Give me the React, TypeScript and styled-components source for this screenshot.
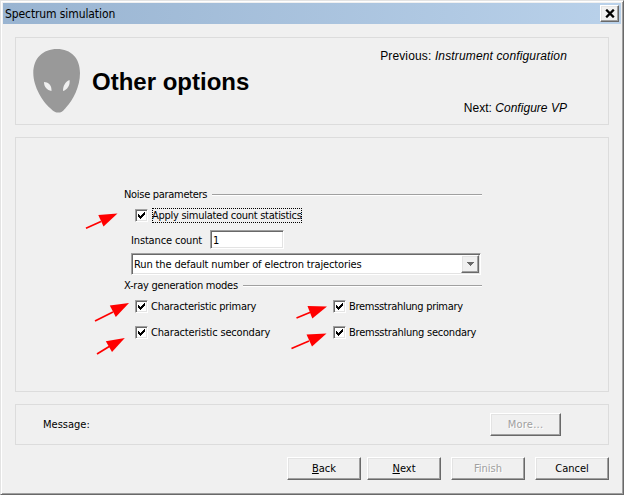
import React from "react";
import styled, { createGlobalStyle, css } from "styled-components";

const GlobalStyle = createGlobalStyle`
  * { box-sizing: border-box; }
  body {
    margin: 0;
    background: #f0f0f0;
    color: #000;
    font: 11px/13px "DejaVu Sans Condensed", "DejaVu Sans", sans-serif;
  }
  button, input { font: inherit; color: inherit; }
`;

const raised = css`
  border: 1px solid;
  border-color: #fff #696969 #696969 #fff;
  box-shadow: inset -1px -1px #a0a0a0, inset 1px 1px #e3e3e3;
`;

const sunken = css`
  border: 1px solid;
  border-color: #a0a0a0 #fff #fff #a0a0a0;
  box-shadow: inset 1px 1px #696969, inset -1px -1px #e3e3e3;
`;

const Dialog = styled.main`
  position: relative;
  display: flex;
  flex-direction: column;
  width: 624px;
  height: 495px;
  padding: 2px;
  background: #f0f0f0;
  border: 1px solid;
  border-color: #e3e3e3 #696969 #696969 #e3e3e3;
  box-shadow: inset 1px 1px #fff, inset -1px -1px #a0a0a0;
  overflow: hidden;
`;

const Text = styled.span<{ $spacing?: number }>`
  display: inline-block;
  white-space: pre;
  letter-spacing: ${(p) => p.$spacing ?? 0}px;
`;

const TitleBar = styled.header`
  display: flex;
  align-items: center;
  justify-content: space-between;
  height: 21px;
  padding: 0 2px;
  flex: none;
  font-size: 12px;
  background: linear-gradient(90deg, #99b4d1, #b9d1ea);
  > ${Text} {
    padding-top: 2px;
  }
`;

const CloseButton = styled.button`
  ${raised}
  display: grid;
  place-items: center;
  width: 19px;
  height: 17px;
  padding: 0;
  background: #f0f0f0;
`;

const Body = styled.div`
  display: flex;
  flex-direction: column;
  gap: 12px;
  padding: 13px 12px 0;
`;

const Panel = styled.section`
  border: 1px solid #dcdcdc;
`;

const Banner = styled(Panel)`
  display: flex;
  height: 88px;
  padding: 10px 41px 10px 17px;
  font: 12px/16px "Liberation Sans", Arial, sans-serif;
`;

const Heading = styled.h1`
  margin: 20px 0 0 11px;
  font: bold 24px/28px "Liberation Sans", Arial, sans-serif;
  white-space: nowrap;
`;

const Steps = styled.div`
  display: flex;
  flex: 1;
  flex-direction: column;
  align-items: flex-end;
  justify-content: space-between;
  height: 68px;
`;

const Options = styled(Panel)`
  height: 255px;
  padding: 50px 126px 0 108px;
`;

const SectionTitle = styled.h2`
  display: flex;
  align-items: center;
  gap: 5px;
  height: 13px;
  margin: 0;
  font: inherit;
  &::after {
    content: "";
    flex: 1;
    height: 2px;
    margin-top: 1px;
    background: linear-gradient(#a0a0a0 50%, #fff 50%);
  }
`;

const Check = styled.label`
  display: flex;
  align-items: center;
  gap: 3px;
  height: 15px;
`;

const Box = styled.span`
  ${sunken}
  display: grid;
  place-items: center;
  width: 13px;
  height: 13px;
  flex: none;
  background: #fff;
`;

const CheckText = styled.span<{ $focused?: boolean }>`
  ${(p) =>
    p.$focused &&
    css`
      height: 15px;
      margin-left: 1px;
      border: 1px dotted #000;
      ${Text} {
        margin: 0 -1px;
      }
    `}
`;

const NoiseFields = styled.div`
  padding: 7px 0 0 11px;
`;

const CountRow = styled.div`
  display: flex;
  align-items: center;
  height: 19px;
  margin: 7px 0 4px -4px;
`;

const CountLabel = styled.label`
  width: 79px;
  padding-top: 2px;
`;

const CountInput = styled.input`
  ${sunken}
  width: 74px;
  height: 19px;
  padding: 2px 2px 0;
  background: #fff;
  outline: none;
`;

const Combo = styled.div`
  ${sunken}
  display: flex;
  align-items: center;
  justify-content: space-between;
  width: 350px;
  height: 22px;
  margin: 0 0 4px -4px;
  padding: 1px 1px 1px 2px;
  background: #fff;
`;

const ComboButton = styled.button`
  ${raised}
  display: grid;
  place-items: center;
  width: 18px;
  height: 18px;
  padding: 0;
  background: #f0f0f0;
`;

const Modes = styled.div`
  display: grid;
  grid-template-columns: 198px auto;
  row-gap: 11px;
  padding: 7px 0 0 11px;
`;

const MessagePanel = styled(Panel)`
  display: flex;
  align-items: center;
  justify-content: space-between;
  height: 41px;
  padding: 0 47px 0 27px;
`;

const Button = styled.button<{ $width?: number }>`
  ${raised}
  width: ${(p) => p.$width ?? 74}px;
  height: 23px;
  padding: 0;
  background: #f0f0f0;
  &:disabled {
    color: #a0a0a0;
    text-shadow: 1px 1px #fff;
  }
`;

const Mnemonic = styled.span`
  text-decoration: underline;
  text-underline-offset: 1px;
  text-decoration-thickness: 1px;
`;

const Footer = styled.footer`
  display: flex;
  justify-content: flex-end;
  gap: 6px;
`;

const CancelSlot = styled.div`
  margin-left: 4px;
`;

const Annotations = styled.svg`
  position: absolute;
  left: -1px;
  top: -1px;
  pointer-events: none;
`;

const arrows = [
  { tail: [86, 228.3], base: [101, 221.5], head: [[117.5, 213.5], [98.3, 215], [103.5, 226.5]] },
  { tail: [95, 321], base: [113, 312], head: [[129, 303], [109.8, 305.5], [115.8, 317]] },
  { tail: [97, 354], base: [110, 346], head: [[124.8, 338], [105.8, 341.2], [112, 352]] },
  { tail: [296.5, 318], base: [311, 312], head: [[327, 306.5], [307.5, 306], [312.3, 318.5]] },
  { tail: [291.5, 348.5], base: [309, 341], head: [[326.5, 333.5], [306.5, 334.5], [312, 346.5]] },
];

const Tick = () => (
  <svg width="9" height="9" viewBox="0 0 9 9" shapeRendering="crispEdges">
    <path d="M1 3h1v3h-1zM2 4h1v3h-1zM3 5h1v3h-1zM4 4h1v3h-1zM5 3h1v3h-1zM6 2h1v3h-1zM7 1h1v3h-1z" />
  </svg>
);

const AlienHead = () => (
  <svg width="48" height="66" viewBox="0 0 48 66">
    <path
      fill="#999"
      d="M24 1C10 1 .3 10 .3 25C.3 39 10 54 17 60C21 64 23 64.6 25.500 64.600C29 64.600 31 62 33 59.500C40 52 47 39 47 25C47 10 38 1 24 1Z"
    />
    <path fill="#f0f0f0" d="M11 34C15 34 19 37 18.500 43C14 42 11 39 11 34ZM36.500 32C37.500 37 34 42 30 43C30 38 32 34 36.500 32Z" />
  </svg>
);

const CheckField = ({ label, spacing, focused }: { label: string; spacing: number; focused?: boolean }) => (
  <Check>
    <Box><Tick /></Box>
    <CheckText $focused={focused}><Text $spacing={spacing}>{label}</Text></CheckText>
  </Check>
);

export default function App() {
  return (
    <>
      <GlobalStyle />
      <Dialog>
        <TitleBar>
          <Text $spacing={-0.1}>Spectrum simulation</Text>
          <CloseButton aria-label="Close">
            <svg width="10" height="9" viewBox="0 0 10 9">
              <path d="M1.200 .7L8.800 8.300M8.800 .7L1.200 8.300" stroke="#000" strokeWidth="2.300" />
            </svg>
          </CloseButton>
        </TitleBar>
        <Body>
          <Banner>
            <AlienHead />
            <Heading>Other options</Heading>
            <Steps>
              <Text $spacing={0.14}>Previous: <i>Instrument configuration</i></Text>
              <Text $spacing={0.03}>Next: <i>Configure VP</i></Text>
            </Steps>
          </Banner>
          <Options>
            <SectionTitle><Text $spacing={-0.3}>Noise parameters</Text></SectionTitle>
            <NoiseFields>
              <CheckField label="Apply simulated count statistics" spacing={-0.27} focused />
              <CountRow>
                <CountLabel><Text $spacing={-0.15}>Instance count</Text></CountLabel>
                <CountInput defaultValue="1" />
              </CountRow>
              <Combo>
                <Text $spacing={-0.13}>Run the default number of electron trajectories</Text>
                <ComboButton aria-label="Open list">
                  <svg width="7" height="4" viewBox="0 0 7 4" shapeRendering="crispEdges">
                    <path fill="#696969" d="M0 0h7v1h-1v1h-1v1h-1v1h-1v-1h-1v-1h-1v-1h-1z" />
                  </svg>
                </ComboButton>
              </Combo>
            </NoiseFields>
            <SectionTitle><Text $spacing={-0.24}>X-ray generation modes</Text></SectionTitle>
            <Modes>
              <CheckField label="Characteristic primary" spacing={-0.25} />
              <CheckField label="Bremsstrahlung primary" spacing={-0.3} />
              <CheckField label="Characteristic secondary" spacing={-0.17} />
              <CheckField label="Bremsstrahlung secondary" spacing={-0.24} />
            </Modes>
          </Options>
          <MessagePanel>
            <Text>Message:</Text>
            <Button $width={71} disabled><Text $spacing={0.25}>More...</Text></Button>
          </MessagePanel>
          <Footer>
            <Button><Text><Mnemonic>B</Mnemonic>ack</Text></Button>
            <Button><Text><Mnemonic>N</Mnemonic>ext</Text></Button>
            <CancelSlot><Button disabled><Text>Finish</Text></Button></CancelSlot>
            <CancelSlot><Button><Text>Cancel</Text></Button></CancelSlot>
          </Footer>
        </Body>
        <Annotations width="624" height="495">
          {arrows.map((a) => (
            <g key={a.tail.join()} fill="#f00" stroke="#f00">
              <line x1={a.tail[0]} y1={a.tail[1]} x2={a.base[0]} y2={a.base[1]} strokeWidth="1.7" />
              <polygon points={a.head.map((p) => p.join()).join(" ")} stroke="none" />
            </g>
          ))}
        </Annotations>
      </Dialog>
    </>
  );
}
